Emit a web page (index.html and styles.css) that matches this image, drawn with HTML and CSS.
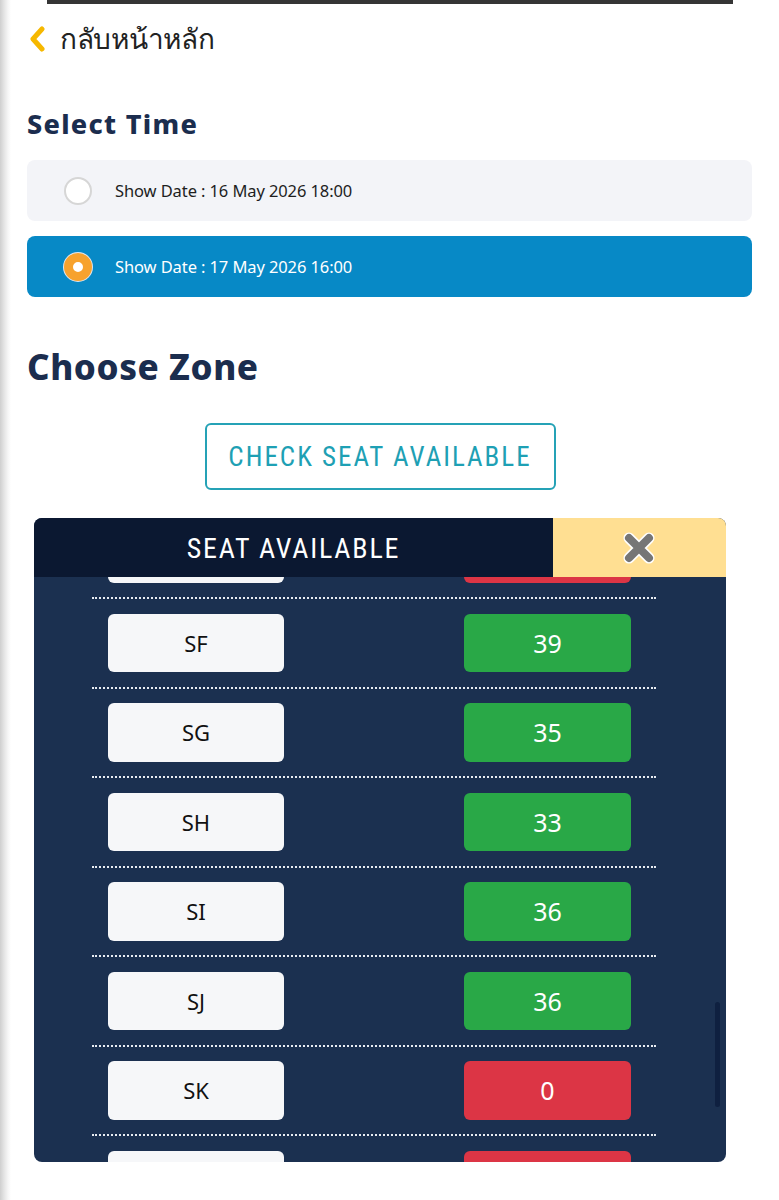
FILE: index.html
```html
<!DOCTYPE html>
<html lang="th">
<head>
<meta charset="utf-8">
<title>Select Time</title>
<link rel="stylesheet" href="styles.css">
</head>
<body>
<div class="page">
  <div class="topbar"></div>
  <main class="content">
    <a class="back" href="#">
      <svg class="chev" width="18" height="26" viewBox="0 0 18 26"><path d="M14 3 L5 13 L14 23" fill="none" stroke="#f6b800" stroke-width="5" stroke-linecap="round" stroke-linejoin="round"/></svg>
      <span>กลับหน้าหลัก</span>
    </a>

    <h2 class="h-time">Select Time</h2>
    <div class="options">
      <label class="opt">
        <span class="radio"></span>
        <span class="opt-text">Show Date : 16 May 2026 18:00</span>
      </label>
      <label class="opt opt-on">
        <span class="radio radio-on"></span>
        <span class="opt-text">Show Date : 17 May 2026 16:00</span>
      </label>
    </div>

    <h2 class="h-zone">Choose Zone</h2>
    <div class="btn-wrap">
      <button class="check">CHECK SEAT AVAILABLE</button>
    </div>

    <section class="modal">
      <header class="m-head">
        <div class="m-title">SEAT AVAILABLE</div>
        <div class="m-close">
          <svg width="36" height="36" viewBox="0 0 36 36">
            <g stroke-linecap="round">
              <path d="M8 8 L28 28 M28 8 L8 28" stroke="#ffffff" stroke-width="11"/>
              <path d="M8 8 L28 28 M28 8 L8 28" stroke="#767676" stroke-width="8"/>
            </g>
          </svg>
        </div>
      </header>
      <div class="m-body">
        <div class="list">
          <div class="row"><div class="zone">SE</div><div class="cnt red">0</div></div>
          <div class="row"><div class="zone">SF</div><div class="cnt green">39</div></div>
          <div class="row"><div class="zone">SG</div><div class="cnt green">35</div></div>
          <div class="row"><div class="zone">SH</div><div class="cnt green">33</div></div>
          <div class="row"><div class="zone">SI</div><div class="cnt green">36</div></div>
          <div class="row"><div class="zone">SJ</div><div class="cnt green">36</div></div>
          <div class="row"><div class="zone">SK</div><div class="cnt red">0</div></div>
          <div class="row"><div class="zone">SL</div><div class="cnt red">0</div></div>
        </div>
        <div class="scrollthumb"></div>
      </div>
    </section>
  </main>
</div>
</body>
</html>
```
FILE: styles.css
```css
html, body {
  margin: 0;
  padding: 0;
}
body {
  background: linear-gradient(to right, #cfcfcf 0, #e4e4e4 4px, #f6f6f6 8px, #ffffff 11px);
  font-family: "Noto Sans", "Open Sans", sans-serif;
  color: #222;
  height: 1200px;
  overflow: hidden;
}
.topbar {
  height: 4px;
  background: #353535;
  margin: 0 46px 0 47px;
}
.content {
  padding: 0 27px 0 27px;
}
.back {
  display: flex;
  align-items: center;
  gap: 14px;
  text-decoration: none;
  color: #222;
  font-size: 28px;
  height: 40px;
  margin-top: 15px;
  padding-left: 1px;
}
.back span {
  font-family: "Noto Sans", "DejaVu Sans", sans-serif;
  letter-spacing: -0.3px;
}
.h-time {
  margin: 49px 0 0 0;
  font-size: 27px;
  line-height: 32px;
  font-weight: 800;
  letter-spacing: 1.3px;
  color: #1b2d4e;
}
.options {
  margin-top: 20px;
  display: flex;
  flex-direction: column;
  gap: 15px;
}
.opt {
  height: 61px;
  border-radius: 8px;
  background: #f3f4f8;
  display: flex;
  align-items: center;
  padding-left: 37px;
}
.opt-on {
  background: #0789c6;
}
.radio {
  width: 28px;
  height: 28px;
  border-radius: 50%;
  background: #fff;
  border: 2px solid #d6d6d6;
  box-sizing: border-box;
  flex: none;
}
.radio-on {
  border: 9px solid #f7a22d;
  box-shadow: 0 0 0 1px #dfe6ee;
  background: #fff;
}
.opt-text {
  margin-left: 23px;
  font-size: 16.5px;
  color: #1e1e1e;
  letter-spacing: -0.1px;
}
.opt-on .opt-text {
  color: #ffffff;
}
.h-zone {
  margin: 50px 0 0 0;
  font-size: 35px;
  line-height: 40px;
  font-weight: 800;
  letter-spacing: 0.6px;
  color: #1b2d4e;
}
.btn-wrap {
  display: flex;
  justify-content: center;
  margin-top: 36px;
  padding-right: 19px;
}
.check {
  width: 351px;
  height: 67px;
  border: 2px solid #25a2b6;
  border-radius: 6px;
  background: #fff;
  color: #1ea0b4;
  font-family: "Liberation Sans Narrow", "Roboto Condensed", "Roboto", sans-serif;
  font-size: 27px;
  letter-spacing: 2px;
  padding: 0;
}
.modal {
  margin: 28px 26px 0 7px;
  border-radius: 8px;
  overflow: hidden;
  background: #1b3050;
}
.m-head {
  display: flex;
  height: 59px;
}
.m-title {
  width: 519px;
  background: #0b1831;
  color: #fff;
  font-family: "Liberation Sans Narrow", "Roboto Condensed", "Roboto", sans-serif;
  font-size: 28px;
  letter-spacing: 1.8px;
  display: flex;
  align-items: center;
  justify-content: center;
  padding-top: 2px;
  box-sizing: border-box;
}
.m-close {
  flex: 1;
  background: #ffdf92;
  display: flex;
  align-items: center;
  justify-content: center;
  padding-right: 1px;
}
.m-body {
  position: relative;
  height: 585px;
  overflow: hidden;
}
.list {
  margin: -67.5px 0 0 58px;
  width: 564px;
}
.row {
  display: flex;
  align-items: center;
  padding: 14.5px 0 14.5px 16px;
  border-bottom: 2px dotted #e9edf3;
  height: 58.5px;
}
.zone {
  width: 176px;
  height: 58.5px;
  background: #f6f7f9;
  border-radius: 6px;
  display: flex;
  align-items: center;
  justify-content: center;
  font-size: 22px;
  color: #111;
  font-family: "Noto Sans", sans-serif;
}
.cnt {
  margin-left: 180px;
  width: 167px;
  height: 58.5px;
  border-radius: 6px;
  display: flex;
  align-items: center;
  justify-content: center;
  font-size: 25px;
  color: #fff;
  font-family: "Noto Sans", sans-serif;
}
.green { background: #29a847; }
.red { background: #dc3545; }
.scrollthumb {
  position: absolute;
  right: 6px;
  top: 425px;
  width: 5px;
  height: 105px;
  border-radius: 3px;
  background: #0f2040;
}
```
